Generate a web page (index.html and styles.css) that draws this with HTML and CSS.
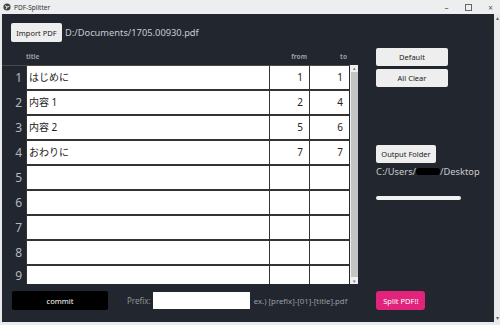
FILE: index.html
```html
<!DOCTYPE html>
<html lang="ja">
<head>
    <meta charset="UTF-8">
    <title>PDF-Splitter</title>
    <link rel="stylesheet" href="styles.css">
</head>
<body>
    <div class="titlebar">
        <div class="app-name">
            <svg class="app-icon" width="8" height="8" viewBox="0 0 8 8">
                <circle cx="4" cy="4" r="3.6" fill="#444"/>
                <path d="M2 2.5 L4 4 L3 6.2 M4 4 L6.3 3.4" stroke="#eee" stroke-width="1" fill="none"/>
            </svg>
            <span>PDF-Splitter</span>
        </div>
        <div class="win-controls">
            <span class="ctl">&#8211;</span>
            <span class="ctl max"></span>
            <span class="ctl">&#215;</span>
        </div>
    </div>

    <div class="frame">
        <div class="window">
            <div class="top">
                <button class="btn">Import PDF</button>
                <span class="path">D:/Documents/1705.00930.pdf</span>
            </div>

            <div class="body">
                <div class="table">
                    <div class="head">
                        <span></span>
                        <span class="h-title">title</span>
                        <span class="h-num">from</span>
                        <span class="h-num">to</span>
                    </div>
                    <div class="rows-wrap">
                        <div class="rows">
                            <div class="row"><span class="num">1</span><span class="cell title">はじめに</span><span class="cell n">1</span><span class="cell n">1</span></div>
                            <div class="row"><span class="num">2</span><span class="cell title">内容 1</span><span class="cell n">2</span><span class="cell n">4</span></div>
                            <div class="row"><span class="num">3</span><span class="cell title">内容 2</span><span class="cell n">5</span><span class="cell n">6</span></div>
                            <div class="row"><span class="num">4</span><span class="cell title">おわりに</span><span class="cell n">7</span><span class="cell n">7</span></div>
                            <div class="row"><span class="num">5</span><span class="cell title"></span><span class="cell n"></span><span class="cell n"></span></div>
                            <div class="row"><span class="num">6</span><span class="cell title"></span><span class="cell n"></span><span class="cell n"></span></div>
                            <div class="row"><span class="num">7</span><span class="cell title"></span><span class="cell n"></span><span class="cell n"></span></div>
                            <div class="row"><span class="num">8</span><span class="cell title"></span><span class="cell n"></span><span class="cell n"></span></div>
                            <div class="row last"><span class="num">9</span><span class="cell title"></span><span class="cell n"></span><span class="cell n"></span></div>
                        </div>
                        <div class="vscroll">
                            <span class="arrow">&#9652;</span>
                            <span class="thumb"></span>
                            <span class="arrow">&#9662;</span>
                        </div>
                    </div>
                </div>

                <div class="side">
                    <button class="btn wide">Default</button>
                    <button class="btn wide">All Clear</button>
                    <button class="btn folder">Output Folder</button>
                    <div class="path out">C:/Users/<span class="redact"></span>/Desktop</div>
                    <div class="progress"></div>
                </div>
            </div>

            <div class="bottom">
                <button class="commit">commit</button>
                <label class="prefix-label">Prefix:</label>
                <input class="prefix" type="text">
                <span class="hint">ex.) [prefix]-[01]-[title].pdf</span>
                <button class="split">Split PDF!!</button>
            </div>
        </div>
        <div class="outer-scroll">
            <span class="arrow">&#9652;</span>
            <span class="arrow">&#9662;</span>
        </div>
    </div>
</body>
</html>
```

FILE: styles.css
```css
body {
    margin: 0;
    width: 500px;
    height: 325px;
    background: #e8eaec;
    font-family: "Noto Sans", "Noto Sans CJK JP", sans-serif;
    overflow: hidden;
}
.titlebar {
    height: 14px;
    display: flex;
    justify-content: space-between;
    align-items: center;
    background: #eceef0;
    font-size: 6.5px;
    color: #333;
}
.app-name {
    display: flex;
    align-items: center;
    gap: 3px;
    padding-left: 3px;
}
.win-controls {
    display: flex;
    align-items: center;
    gap: 14px;
    padding-right: 5px;
    font-size: 8px;
    color: #555;
}
.ctl {
    width: 9px;
    text-align: center;
}
.ctl.max {
    width: 5px;
    height: 5px;
    border: 1px solid #666;
}
.frame {
    display: flex;
    height: 308px;
}
.window {
    width: 492px;
    margin-left: 2px;
    background: #22262e;
    display: flex;
    flex-direction: column;
}
.outer-scroll {
    width: 6px;
    display: flex;
    flex-direction: column;
    justify-content: space-between;
    font-size: 6px;
    color: #666;
    text-align: center;
}
.btn {
    background: #eeeeee;
    border: none;
    border-radius: 2px;
    font-family: inherit;
    font-size: 7.5px;
    color: #222;
    padding: 0;
    height: 19px;
    white-space: nowrap;
}
.top {
    display: flex;
    align-items: center;
    gap: 3px;
    padding: 9px 0 0 9px;
}
.top .btn {
    width: 51px;
}
.path {
    font-size: 9.3px;
    color: #c9cbcf;
}
.body {
    display: flex;
    margin-top: 6px;
}
.table {
    width: 356px;
}
.head {
    display: grid;
    grid-template-columns: 24px 243px 40px 40px;
    height: 17px;
    align-items: center;
    font-size: 6.5px;
    font-weight: bold;
    color: #9a9ea6;
}
.h-num {
    text-align: right;
    padding-right: 2px;
}
.rows-wrap {
    display: flex;
    height: 219px;
    overflow: hidden;
}
.rows {
    width: 348px;
    border-top: 1px solid #4a4a4a;
}
.row {
    display: grid;
    grid-template-columns: 24px 243px 40px 40px;
    height: 25px;
}
.num {
    font-size: 12px;
    color: #b4b8be;
    text-align: right;
    padding-right: 4px;
    line-height: 24px;
}
.row.last .num {
    line-height: 20px;
}
.cell {
    background: #fff;
    border-left: 1px solid #333;
    border-bottom: 2px solid #333;
    font-size: 10px;
    color: #222;
    line-height: 23px;
}
.title {
    padding-left: 2px;
}
.n {
    text-align: right;
    padding-right: 6px;
}
.vscroll {
    width: 8px;
    background: #f0f0f0;
    display: flex;
    flex-direction: column;
    align-items: center;
    font-size: 5px;
    color: #777;
}
.thumb {
    flex: 1;
    width: 7px;
    background: #c4c4c4;
    margin: 1px 0;
}
.side {
    display: flex;
    flex-direction: column;
    align-items: flex-start;
    padding-left: 18px;
}
.wide {
    width: 72px;
    height: 18px;
    margin-bottom: 3px;
}
.folder {
    width: 60px;
    height: 18px;
    margin-top: 55px;
}
.out {
    margin-top: 2px;
    display: flex;
    align-items: center;
}
.redact {
    display: inline-block;
    width: 24px;
    height: 7px;
    background: #000;
    border-radius: 3px;
}
.progress {
    width: 85px;
    height: 4px;
    background: #f2f2f2;
    border-radius: 2px;
    margin-top: 18px;
}
.bottom {
    display: flex;
    align-items: center;
    margin-top: 7px;
    padding-left: 10px;
}
.commit {
    width: 96px;
    height: 19px;
    background: #000;
    color: #fff;
    border: none;
    border-radius: 2px;
    font-family: inherit;
    font-size: 7.5px;
}
.prefix-label {
    margin-left: 19px;
    font-size: 8px;
    color: #8e929a;
}
.prefix {
    width: 97px;
    height: 17px;
    box-sizing: border-box;
    border: none;
    margin-left: 2px;
    padding: 0;
}
.hint {
    margin-left: 4px;
    font-size: 7.8px;
    color: #9a9ea6;
}
.split {
    margin-left: 29px;
    width: 49px;
    height: 19px;
    background: #e2237c;
    color: #fff;
    border: none;
    border-radius: 3px;
    font-family: inherit;
    font-size: 7.5px;
    padding: 0;
    white-space: nowrap;
}
```
